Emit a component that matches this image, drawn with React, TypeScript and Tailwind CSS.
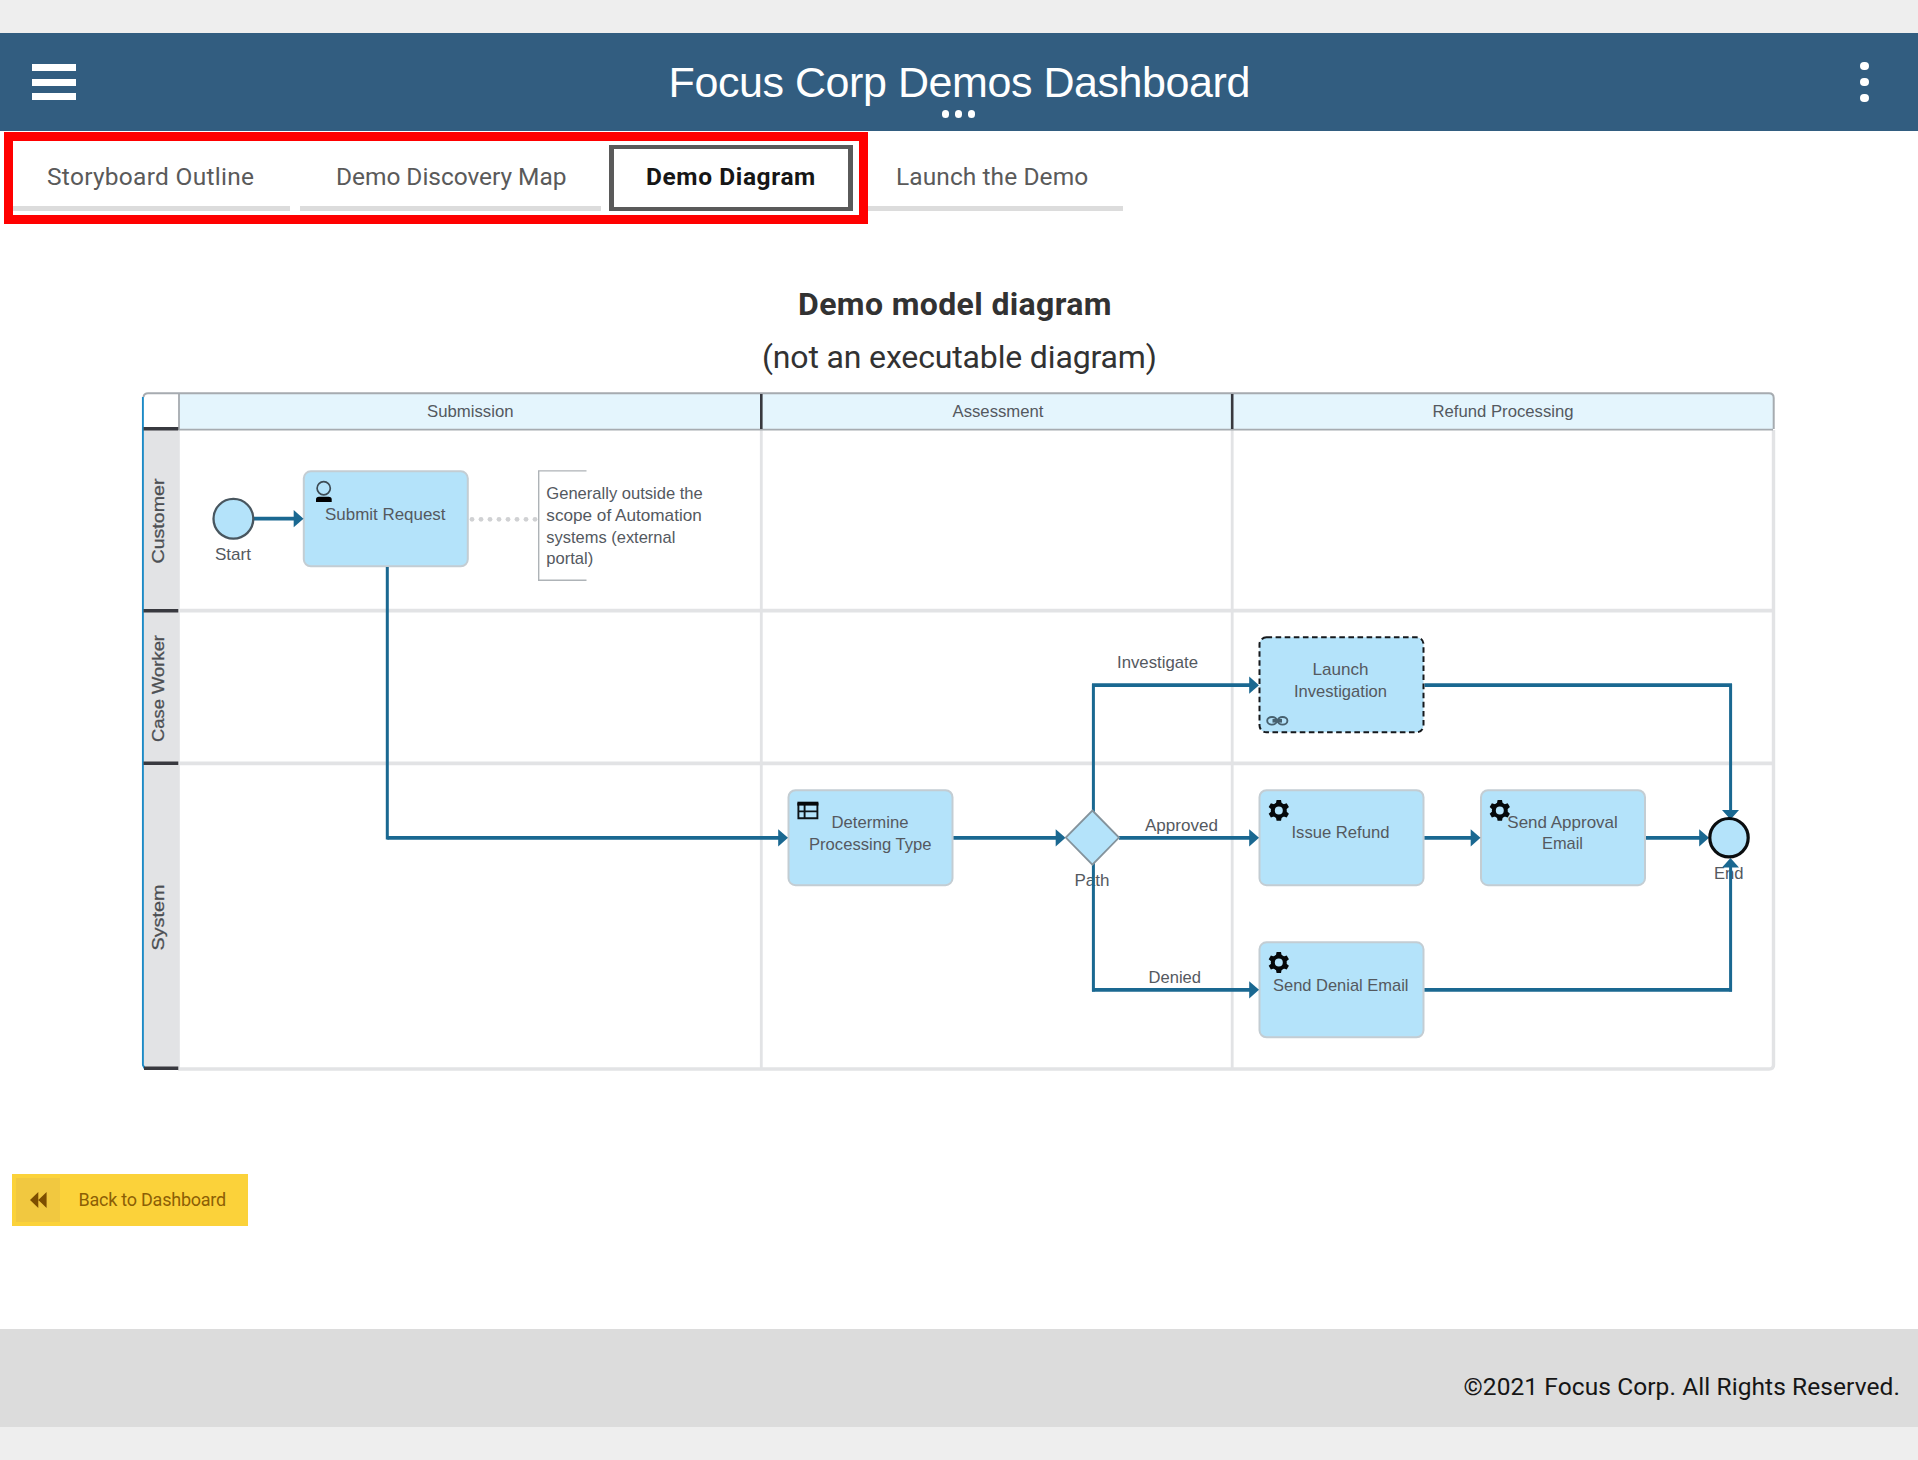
import type { ReactNode } from "react";

const TEXT = "#54595f";
const LINK = "#1a6891";

function Label({
  x,
  y,
  w,
  children,
}: {
  x: number;
  y: number;
  w: number;
  children: string;
}) {
  return (
    <text x={x} y={y - 0.5} textLength={w} lengthAdjust="spacingAndGlyphs" fontSize="17" fill={TEXT}>
      {children}
    </text>
  );
}

function VerticalLabel({ y, w, children }: { y: number; w: number; children: string }) {
  return (
    <text
      transform={`translate(164.2 ${y}) rotate(-90)`}
      textLength={w}
      lengthAdjust="spacingAndGlyphs"
      fontSize="17"
      fill="#4c4f53"
      stroke="#4c4f53"
      strokeWidth="0.3"
    >
      {children}
    </text>
  );
}

function Task({ x, y, dashed, children }: { x: number; y: number; dashed?: boolean; children: ReactNode }) {
  return (
    <g>
      <rect
        x={x}
        y={y}
        width="164"
        height="95"
        rx="7"
        fill="#b4e3fa"
        stroke={dashed ? "#16191c" : "#c3cdd3"}
        strokeWidth="2"
        strokeDasharray={dashed ? "5.6 3.5" : undefined}
      />
      {children}
    </g>
  );
}

function Gear({ x, y }: { x: number; y: number }) {
  return (
    <g transform={`translate(${x} ${y})`} stroke="#05080a" fill="none">
      <circle r="6" strokeWidth="4" />
      {[0, 60, 120, 180, 240, 300].map((a) => (
        <path key={a} d="M-3-6.5 L-2.2-10.4 H2.2 L3-6.5Z" fill="#05080a" stroke="none" transform={`rotate(${a})`} />
      ))}
    </g>
  );
}

const RIGHT_HEADS: [number, number][] = [
  [303.5, 518.7],
  [788, 837.8],
  [1065.5, 837.8],
  [1259, 685.2],
  [1259, 837.8],
  [1259, 989.8],
  [1480.5, 837.8],
  [1709, 837.8],
];

const DOTS = [472, 481, 490, 499, 508, 517, 526, 535];

function ProcessDiagram() {
  return (
    <svg
      width="1638"
      height="682"
      viewBox="140 391 1638 682"
      className="block"
      fontFamily='"Liberation Sans", Arial, sans-serif'
    >
      {/* swimlane frame */}
      <path d="M179 393.5H1769Q1773.500 393.500 1773.500 398V429.500H179Z" fill="#e4f5fd" />
      <rect x="143" y="430" width="36.800" height="638" fill="#e2e3e5" />
      <g stroke="#e2e3e5" fill="none">
        <path d="M180 610.700H1773M180 763.300H1773" strokeWidth="3.800" />
        <path d="M761.300 430V1068M1232.200 430V1068" strokeWidth="2.800" />
        <path d="M178 1069H1769Q1773.500 1069 1773.500 1065V430" strokeWidth="3.400" />
      </g>
      <g stroke="#a6abb0" fill="none">
        <path d="M143.500 397Q144 393.300 148 393.300H1769Q1773.700 393.300 1773.700 398V429" strokeWidth="2" />
        <path d="M179 393V430M179 429.700H1773" strokeWidth="1.800" />
      </g>
      <path d="M142.900 397V1065L145 1069" stroke="#1c8ac6" strokeWidth="1.900" fill="none" />
      <g stroke="#38393f" fill="none">
        <path d="M143.500 428.700H178.300M143.500 610.800H178.300M143.500 763.300H178.300M144 1068.200H178.300" strokeWidth="3.500" />
        <path d="M761.300 394V429M1232.200 394V429" strokeWidth="2.600" />
      </g>
      <Label x={427} y={417} w={86.500}>Submission</Label>
      <Label x={952.500} y={417} w={91}>Assessment</Label>
      <Label x={1432.500} y={417} w={141}>Refund Processing</Label>
      <VerticalLabel y={563.500} w={85}>Customer</VerticalLabel>
      <VerticalLabel y={742} w={107}>Case Worker</VerticalLabel>
      <VerticalLabel y={950.500} w={66}>System</VerticalLabel>

      {/* free labels */}
      <Label x={215} y={560.300} w={36}>Start</Label>
      <Label x={1117} y={668.300} w={81}>Investigate</Label>
      <Label x={1145} y={831} w={73}>Approved</Label>
      <Label x={1148.500} y={983.300} w={52.500}>Denied</Label>
      <Label x={1074.500} y={886.500} w={35}>Path</Label>
      <Label x={1714} y={879.700} w={29.500}>End</Label>

      {/* annotation */}
      <path d="M586.500 470.900H538.700V580.300H586.500" stroke="#aeb3b7" strokeWidth="1.400" fill="none" />
      {DOTS.map((x) => (
        <circle key={x} cx={x} cy="519.300" r="2.400" fill="#d0d1d3" />
      ))}
      <Label x={546.300} y={499.300} w={156.500}>Generally outside the</Label>
      <Label x={546.300} y={521.300} w={155.500}>scope of Automation</Label>
      <Label x={546.300} y={543.200} w={129}>systems (external</Label>
      <Label x={546.300} y={564.900} w={47}>portal)</Label>

      {/* tasks */}
      <Task x={303.800} y={471.300}>
        <circle cx="323.700" cy="488.300" r="6.600" fill="none" stroke="#3d4b54" strokeWidth="1.700" />
        <path d="M316 502V499.500Q316 496.700 319 496.700H328.600Q331.700 496.700 331.700 499.500V502Z" fill="#000" />
        <Label x={325} y={520} w={120.500}>Submit Request</Label>
      </Task>
      <Task x={788.500} y={790.200}>
        <path d="M798.400 803V818.200H817.400V803M798.400 811.400H817.400M804.600 804V818.200" stroke="#0d1418" strokeWidth="1.900" fill="none" />
        <rect x="797.400" y="801.700" width="21" height="3.900" fill="#05080a" />
        <Label x={831.500} y={828} w={77}>Determine</Label>
        <Label x={809} y={850} w={122.500}>Processing Type</Label>
      </Task>
      <Task x={1259.500} y={637.300} dashed>
        <g fill="none" stroke="#47616f" strokeWidth="1.900">
          <ellipse cx="1272" cy="720.800" rx="4.800" ry="3.800" />
          <ellipse cx="1282.600" cy="720.800" rx="4.800" ry="3.800" />
          <path d="M1272.500 720.800H1282" strokeWidth="3.600" />
        </g>
        <Label x={1312.500} y={675.300} w={56}>Launch</Label>
        <Label x={1294} y={697} w={93}>Investigation</Label>
      </Task>
      <Task x={1259.500} y={790.200}>
        <Gear x={1278.800} y={810.400} />
        <Label x={1291.500} y={838.700} w={98}>Issue Refund</Label>
      </Task>
      <Task x={1481} y={790.200}>
        <Gear x={1499.800} y={810.400} />
        <Label x={1507.300} y={828} w={110.500}>Send Approval</Label>
        <Label x={1542} y={849.700} w={41}>Email</Label>
      </Task>
      <Task x={1259.500} y={942.300}>
        <Gear x={1278.800} y={962.500} />
        <Label x={1273} y={991} w={135.500}>Send Denial Email</Label>
      </Task>

      {/* connectors */}
      <g stroke={LINK} fill="none" strokeWidth="3.700">
        <path d="M254 518.700H295M387.300 837.800H780M953.500 837.800H1057M1119 837.800H1251M1424.500 837.800H1472M1646 837.800H1701" />
        <path d="M1092 685.200H1250M1424.500 685.200H1732M1092 989.800H1250M1424.500 989.800H1732" />
        <path d="M387.300 567V839.500M1093.400 684V812M1093.400 862V991.500M1730.600 684V812M1730.600 865V991.500" strokeWidth="3" />
      </g>
      <g fill={LINK}>
        {RIGHT_HEADS.map(([x, y]) => (
          <path key={`${x}-${y}`} d={`M${x} ${y}l-9.800 -8.600v17.200Z`} />
        ))}
        <path d="M1730.500 819.500l-8.500 -9.500h17ZM1730.500 858l-8.500 9.500h17Z" />
      </g>

      {/* events and gateway */}
      <circle cx="233.400" cy="518.800" r="19.900" fill="#b4e3fa" stroke="#48565f" strokeWidth="2.300" />
      <path d="M1092.400 810.500L1119 837.600L1092.400 864.700L1065.800 837.600Z" fill="#b4e3fa" stroke="#84939c" strokeWidth="1.800" />
      <circle cx="1729" cy="837.700" r="19.200" fill="#b4e3fa" stroke="#0a0d0f" strokeWidth="3.200" />
    </svg>
  );
}

export default function App() {
  return (
    <div className="flex h-[1460px] w-[1918px] flex-col overflow-hidden bg-[#eeeeee] pt-[33px] font-['Roboto',sans-serif]">
      <header className="relative flex h-[98px] shrink-0 items-center justify-between bg-[#325d80] pr-[49px] pl-8">
        <button className="flex w-11 flex-col gap-[7.5px]" aria-label="Menu">
          <span className="h-[7px] bg-white" />
          <span className="h-[7px] bg-white" />
          <span className="h-[7px] bg-white" />
        </button>
        <h1 className="mr-[18px] font-['Liberation_Sans',sans-serif] text-[43px] leading-[48px] tracking-[-0.44px] whitespace-nowrap text-white">
          Focus Corp Demos Dashboard
        </h1>
        <button className="flex flex-col gap-[7.4px]" aria-label="More">
          <span className="size-[8.500px] rounded-full bg-white" />
          <span className="size-[8.500px] rounded-full bg-white" />
          <span className="size-[8.500px] rounded-full bg-white" />
        </button>
        <div className="absolute bottom-[13.500px] left-[942px] flex gap-[5.600px]">
          <span className="size-[7.400px] rounded-full bg-white" />
          <span className="size-[7.400px] rounded-full bg-white" />
          <span className="size-[7.400px] rounded-full bg-white" />
        </div>
      </header>

      <main className="flex h-[1198px] shrink-0 flex-col bg-white">
        <nav className="relative flex h-20 shrink-0 items-end text-[24.500px] whitespace-nowrap text-[#5a5a5a]">
          <div className="ml-[10px] flex h-[66px] w-[280px] border-b-[5.500px] border-[#dcdcdc] pt-4 pl-[37px] leading-8">
            <span className="tracking-[0.28px]">Storyboard Outline</span>
          </div>
          <div className="ml-[10px] flex h-[66px] w-[301px] border-b-[5.500px] border-[#dcdcdc] pt-4 pl-[36px] leading-8">
            <span className="tracking-[-0.05px]">Demo Discovery Map</span>
          </div>
          <div className="ml-2 flex h-[66px] w-[244px] border-x-[5px] border-y-4 border-[#5a5a5a] pt-3 pl-[32px] leading-8 font-bold text-[#161616]">
            <span className="tracking-[0.6px]">Demo Diagram</span>
          </div>
          <div className="ml-[9px] flex h-[66px] w-[261px] border-b-[5.500px] border-[#dcdcdc] pt-4 pl-[34px] leading-8">
            <span className="tracking-[0.08px]">Launch the Demo</span>
          </div>
          <div className="absolute top-[1px] left-1 h-[92px] w-[864px] border-[9px] border-[#ff0000]" />
        </nav>

        <section className="mt-[67px] flex flex-col">
          <h2 className="pl-[798px] text-[32px] leading-[53px] font-bold whitespace-nowrap text-[#323232]">
            <span className="tracking-[0.37px]">Demo model diagram</span>
          </h2>
          <p className="pl-[762px] text-[32px] leading-[53px] whitespace-nowrap text-[#323232]">
            <span className="tracking-[-0.15px]">(not an executable diagram)</span>
          </p>
          <div className="mt-[7px] ml-[140px]">
            <ProcessDiagram />
          </div>
        </section>

        <button className="mt-[100.500px] ml-3 flex h-[52.500px] w-[236px] items-center bg-[#fbd23a] pl-1 text-[18px] whitespace-nowrap text-[#8c5f05]">
          <span className="flex size-[43.500px] items-center justify-center bg-[#f1c840] pl-[2px]">
            <svg width="17" height="16" viewBox="0 0 17 16" fill="#7d4e00">
              <path d="M0 8L8.300 0V16ZM8.300 8L16.600 0V16Z" />
            </svg>
          </span>
          <span className="ml-[19px] tracking-[-0.24px]">Back to Dashboard</span>
        </button>
      </main>

      <footer className="flex h-[98px] shrink-0 items-center justify-end bg-[#dcdcdc] pt-[18px] pr-[18px] text-[24.500px] text-[#161616]">
        <span className="tracking-[0.08px]">©2021 Focus Corp. All Rights Reserved.</span>
      </footer>
    </div>
  );
}
